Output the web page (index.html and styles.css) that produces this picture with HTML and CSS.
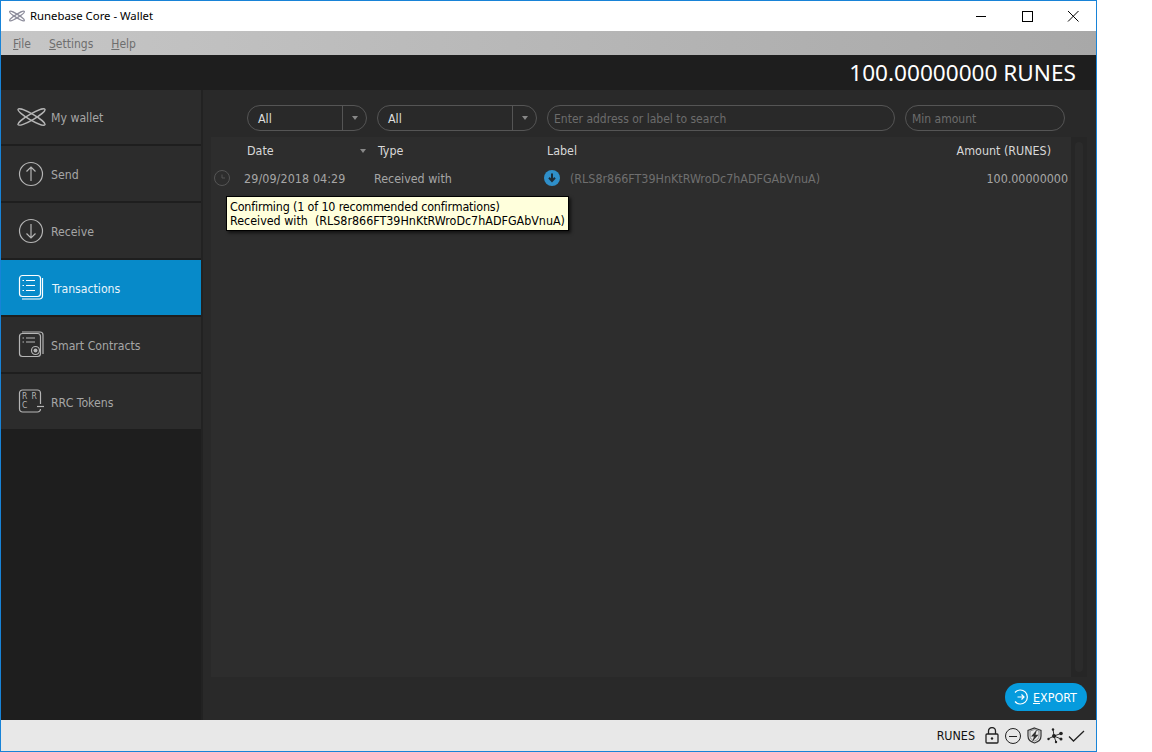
FILE: index.html
```html
<!DOCTYPE html>
<html lang="en">
<head>
    <meta charset="UTF-8">
    <title>Runebase Core - Wallet</title>
    <link rel="stylesheet" href="styles.css">
</head>
<body>

<div class="window">
    <div class="titlebar">
        <svg class="app-icon" width="16" height="12" viewBox="0 0 30 22">
            <g fill="none" stroke="#8d8d9c" stroke-width="2.500">
                <ellipse cx="15" cy="11" rx="16" ry="3" transform="rotate(32 15 11)"/>
                <ellipse cx="15" cy="11" rx="16" ry="3" transform="rotate(-32 15 11)"/>
            </g>
        </svg>
        <span class="title">Runebase Core - Wallet</span>
        <div class="win-buttons">
            <svg width="46" height="31" viewBox="0 0 46 31"><path d="M18 15.500h10" stroke="#000" fill="none"/></svg>
            <svg width="46" height="31" viewBox="0 0 46 31"><rect x="18.500" y="10.500" width="10" height="10" stroke="#000" fill="none"/></svg>
            <svg width="46" height="31" viewBox="0 0 46 31"><path d="M18 10l10.500 10.500M28.500 10L18 20.500" stroke="#000" fill="none"/></svg>
        </div>
    </div>

    <div class="menubar">
        <span class="menu-item"><u>F</u>ile</span>
        <span class="menu-item"><u>S</u>ettings</span>
        <span class="menu-item"><u>H</u>elp</span>
    </div>

    <div class="balance-bar">100.00000000 RUNES</div>

    <div class="content">
        <div class="sidebar">
            <div class="nav-item">
                <svg class="nav-icon" width="30" height="30" viewBox="0 0 30 30">
                    <g fill="none" stroke="#b5b5b5" stroke-width="1.400">
                        <ellipse cx="15.500" cy="15" rx="15.500" ry="3" transform="rotate(30 15.500 15)"/>
                        <ellipse cx="15.500" cy="15" rx="15.500" ry="3" transform="rotate(-30 15.500 15)"/>
                    </g>
                </svg>
                <span>My wallet</span>
            </div>
            <div class="nav-item">
                <svg class="nav-icon" width="30" height="30" viewBox="0 0 30 30">
                    <g fill="none" stroke="#b5b5b5" stroke-width="1.200">
                        <circle cx="15" cy="15" r="11.500"/>
                        <path d="M15 22V8M10.500 12.500L15 8l4.500 4.500"/>
                    </g>
                </svg>
                <span>Send</span>
            </div>
            <div class="nav-item">
                <svg class="nav-icon" width="30" height="30" viewBox="0 0 30 30">
                    <g fill="none" stroke="#b5b5b5" stroke-width="1.200">
                        <circle cx="15" cy="15" r="11.500"/>
                        <path d="M15 8v14M10.500 17.500L15 22l4.500-4.500"/>
                    </g>
                </svg>
                <span>Receive</span>
            </div>
            <div class="nav-item active">
                <svg class="nav-icon" width="30" height="30" viewBox="0 0 30 30">
                    <g fill="none" stroke="#fff" stroke-width="1.200">
                        <rect x="3.500" y="2.500" width="21" height="21" rx="3"/>
                        <path d="M26.500 5v18a3 3 0 0 1-3 3H6"/>
                        <path d="M10 7.500h9M10 12.500h9M10 17.500h9"/>
                        <path d="M6.500 7.500h1.500M6.500 12.500h1.500M6.500 17.500h1.500"/>
                    </g>
                </svg>
                <span>Transactions</span>
            </div>
            <div class="nav-item">
                <svg class="nav-icon" width="30" height="30" viewBox="0 0 30 30">
                    <g fill="none" stroke="#b5b5b5" stroke-width="1.200">
                        <rect x="3.500" y="3.500" width="21" height="23" rx="3"/>
                        <path d="M6 2h18a3 3 0 0 1 3 3v19"/>
                        <path d="M6.500 8h1.500M6.500 12h1.500M10 8h9M10 12h9"/>
                        <circle cx="19.500" cy="20.500" r="4"/>
                    </g>
                    <circle cx="19.500" cy="20.500" r="2" fill="#b5b5b5"/>
                </svg>
                <span>Smart Contracts</span>
            </div>
            <div class="nav-item">
                <svg class="nav-icon" width="30" height="30" viewBox="0 0 30 30">
                    <g fill="none" stroke="#b5b5b5" stroke-width="1.200">
                        <path d="M24.500 17V6a3 3 0 0 0-3-3H6.500a3 3 0 0 0-3 3v16a3 3 0 0 0 3 3h15a3 3 0 0 0 3-3"/>
                        <path d="M21 19.500h7"/>
                    </g>
                    <text class="rrc-letter" x="6" y="12">R</text>
                    <text class="rrc-letter" x="15.500" y="12">R</text>
                    <text class="rrc-letter" x="6" y="21">C</text>
                </svg>
                <span>RRC Tokens</span>
            </div>
        </div>

        <div class="main">
            <div class="filters">
                <div class="select select-type-a">
                    <span class="select-value">All</span>
                    <span class="select-arrow"></span>
                </div>
                <div class="select select-type-b">
                    <span class="select-value">All</span>
                    <span class="select-arrow"></span>
                </div>
                <div class="search search-address">Enter address or label to search</div>
                <div class="search search-amount">Min amount</div>
            </div>

            <div class="table-wrap">
                <div class="table">
                    <div class="table-head">
                        <span class="col-date">Date<i class="sort-arrow"></i></span>
                        <span class="col-type">Type</span>
                        <span class="col-label">Label</span>
                        <span class="col-amount">Amount (RUNES)</span>
                    </div>
                    <div class="table-row">
                        <svg class="status-icon" width="16" height="16" viewBox="0 0 16 16">
                            <circle cx="8" cy="8" r="7.500" fill="none" stroke="#555"/>
                            <path d="M8 4.500V8h3" fill="none" stroke="#555"/>
                        </svg>
                        <span class="row-date">29/09/2018 04:29</span>
                        <span class="row-type">Received with</span>
                        <svg class="type-icon" width="16" height="16" viewBox="0 0 16 16">
                            <circle cx="8" cy="8" r="8" fill="#2f8fc9"/>
                            <path d="M8 3.500v7M5 7.800L8 11l3-3.200" fill="none" stroke="#1d2b36" stroke-width="2"/>
                        </svg>
                        <span class="row-label">(RLS8r866FT39HnKtRWroDc7hADFGAbVnuA)</span>
                        <span class="row-amount">100.00000000</span>
                    </div>
                    <div class="tooltip"><span class="tooltip-first">Confirming (1 of 10 recommended confirmations)</span><br>Received with&nbsp; (RLS8r866FT39HnKtRWroDc7hADFGAbVnuA)</div>
                </div>
                <div class="scrollbar"><div class="scroll-track"></div></div>
            </div>

            <div class="actions">
                <div class="export-btn">
                    <svg width="16" height="16" viewBox="0 0 16 16">
                        <g fill="none" stroke="#fff" stroke-width="1.200">
                            <path d="M2 3.500a7 7 0 1 1 0 9"/>
                            <path d="M4.500 8h6.500M8.500 5.500L11 8l-2.500 2.500"/>
                        </g>
                    </svg>
                    <span><u>E</u>XPORT</span>
                </div>
            </div>
        </div>
    </div>

    <div class="statusbar">
        <span class="unit">RUNES</span>
        <svg width="14" height="17" viewBox="0 0 14 17">
            <g fill="none" stroke="#222" stroke-width="1.300">
                <rect x="1" y="7" width="12" height="9" rx="1"/>
                <path d="M3.500 7V4a3.500 3.500 0 0 1 7 0v3"/>
            </g>
            <circle cx="7" cy="11.500" r="1.200" fill="#222"/>
        </svg>
        <svg width="16" height="16" viewBox="0 0 16 16">
            <g fill="none" stroke="#222" stroke-width="1">
                <circle cx="8" cy="8" r="7.500"/>
                <path d="M4 8.500h8"/>
            </g>
        </svg>
        <svg width="15" height="17" viewBox="0 0 15 17">
            <path d="M7.500 1L14 3.500V9c0 3.500-3 6-6.500 7C4 15 1 12.500 1 9V3.500z" fill="none" stroke="#333" stroke-width="1.200"/>
            <path d="M3 4L7.500 2.500 12 4V9c0 2.500-2 4.300-4.500 5C5 13.300 3 11.500 3 9z" fill="none" stroke="#777" stroke-width="0.800"/>
            <path d="M10 2.500L4 9.500H7L5 15l6.500-7.200H8.500z" fill="#333"/>
        </svg>
        <svg class="network" width="16" height="16" viewBox="0 0 16 16">
            <g stroke="#333" stroke-width="1" fill="none">
                <path d="M7 8L6 1M7 8L1 11M7 8l2 6M7 8l7-2.500M7 8l7 3"/>
            </g>
            <g fill="#222">
                <circle cx="7" cy="8" r="2"/>
                <circle cx="6" cy="1.500" r="1.200"/>
                <circle cx="1.500" cy="11" r="1.200"/>
                <circle cx="9" cy="14" r="1.200"/>
                <circle cx="14" cy="5.500" r="1.800"/>
                <circle cx="14" cy="11" r="1.500"/>
            </g>
        </svg>
        <svg class="check" width="17" height="12" viewBox="0 0 17 12">
            <path d="M1 6.500L5.500 11 16 1" fill="none" stroke="#222" stroke-width="1.300"/>
        </svg>
    </div>
</div>

</body>
</html>
```

FILE: styles.css
```css
html, body {
    margin: 0;
    padding: 0;
    background: #fff;
}

body {
    font-family: "DejaVu Sans Condensed", "DejaVu Sans", sans-serif;
    font-stretch: condensed;
    font-size: 12.4px;
    overflow: hidden;
}

.window {
    width: 1095px;
    height: 750px;
    border: 1px solid #1883d7;
    display: flex;
    flex-direction: column;
}

.titlebar {
    height: 30px;
    background: #fff;
    display: flex;
    align-items: center;
    flex-shrink: 0;
}

.app-icon {
    margin-left: 8px;
}

.title {
    margin-left: 5px;
    padding-bottom: 2px;
    color: #000;
    font-family: "Noto Sans", sans-serif;
    font-stretch: normal;
    font-size: 11.35px;
}

.win-buttons {
    margin-left: auto;
    display: flex;
}

.win-buttons svg {
    width: 46px;
    margin-left: 0;
}

.menubar {
    height: 23px;
    padding-top: 1px;
    background: linear-gradient(to right, #c6c6c6, #a8a8a8);
    display: flex;
    align-items: center;
    padding-left: 12px;
    gap: 18px;
    color: #6e6e6e;
    font-size: 12px;
    flex-shrink: 0;
}

.balance-bar {
    height: 35px;
    line-height: 36px;
    background: #1e1e1e;
    color: #fff;
    font-family: "Noto Sans", sans-serif;
    font-stretch: normal;
    font-size: 22.6px;
    text-align: right;
    padding-right: 20px;
    flex-shrink: 0;
}

.content {
    flex: 1;
    display: flex;
    min-height: 0;
    background: #292929;
}

.sidebar {
    width: 200px;
    background: #1e1e1e;
    border-right: 2px solid #222;
    flex-shrink: 0;
}

.nav-item {
    height: 55px;
    margin-bottom: 2px;
    background: #2c2c2c;
    display: flex;
    align-items: center;
    color: #a6a6a6;
    font-size: 12.2px;
}

.nav-item span {
    padding-top: 2px;
}

.nav-item:first-child {
    height: 54px;
}

.nav-item:first-child span {
    padding-top: 1px;
}

.nav-item.active {
    background: #078ac9;
    color: #e8f4fb;
}

.nav-item.active .nav-icon {
    margin-right: 6px;
}

.nav-icon {
    margin-left: 15px;
    margin-right: 5px;
}

.rrc-letter {
    fill: #b5b5b5;
    font-family: "DejaVu Sans", sans-serif;
    font-size: 8.500px;
}

.main {
    flex: 1;
    display: flex;
    flex-direction: column;
    min-width: 0;
    padding: 15px 9px 0 8px;
}

.filters {
    display: flex;
    height: 26px;
    padding-left: 36px;
    flex-shrink: 0;
}

.select,
.search {
    height: 24px;
    border: 1px solid #555;
    border-radius: 13px;
    display: flex;
    align-items: center;
}

.select {
    color: #ddd;
}

.select-type-a {
    width: 118px;
    margin-right: 10px;
}

.select-type-b {
    width: 158px;
    margin-right: 10px;
}

.select-value {
    flex: 1;
    padding-left: 10px;
    height: 24px;
    line-height: 26px;
    border-right: 1px solid #555;
}

.select-arrow {
    width: 23px;
    display: flex;
    justify-content: center;
}

.select-arrow::after,
.sort-arrow {
    content: "";
    display: block;
    width: 0;
    height: 0;
    border-left: 3px solid transparent;
    border-right: 3px solid transparent;
    border-top: 4px solid #888;
}

.search {
    color: #6c6c6c;
    font-size: 12px;
    padding-left: 6px;
    padding-top: 1px;
    height: 23px;
}

.search-address {
    width: 340px;
    margin-right: 10px;
}

.search-amount {
    width: 152px;
}

.table-wrap {
    margin-top: 6px;
    flex: 1;
    display: flex;
    min-height: 0;
}

.table {
    flex: 1;
    background: #2d2d2d;
    position: relative;
}

.table-head {
    height: 27px;
    display: flex;
    align-items: center;
    color: #d8d8d8;
}

.col-date {
    width: 131px;
    margin-left: 36px;
    display: flex;
    align-items: center;
    justify-content: space-between;
    padding-right: 12px;
    box-sizing: border-box;
}

.col-type {
    width: 169px;
}

.col-label {
    flex: 1;
}

.col-amount {
    padding-right: 20px;
}

.table-row {
    height: 28px;
    display: flex;
    align-items: center;
    color: #a6a6a6;
}

.status-icon {
    margin-left: 3px;
}

.row-date {
    margin-left: 14px;
    width: 130px;
    letter-spacing: 0.1px;
}

.row-type {
    width: 170px;
}

.type-icon {
    flex-shrink: 0;
}

.row-label {
    margin-left: 10px;
    color: #6f6f6f;
}

.row-amount {
    margin-left: auto;
    padding-right: 3px;
}

.tooltip {
    position: absolute;
    left: 15px;
    top: 59px;
    background: #ffffdc;
    color: #000;
    border: 1px solid #000;
    box-shadow: 2px 2px 3px rgba(0, 0, 0, 0.6);
    padding: 3px 3px 2px 3px;
    line-height: 14px;
    white-space: nowrap;
}

.tooltip-first {
    letter-spacing: -0.15px;
}

.scrollbar {
    width: 16px;
    background: #262626;
    padding: 5px 4px;
    box-sizing: border-box;
}

.scroll-track {
    height: 100%;
    background: #2b2b2b;
    border-radius: 4px;
}

.actions {
    height: 43px;
    display: flex;
    justify-content: flex-end;
    align-items: flex-start;
    flex-shrink: 0;
}

.export-btn {
    margin-top: 6px;
    width: 82px;
    height: 28px;
    background: #069bdd;
    border-radius: 14px;
    color: #fff;
    display: flex;
    align-items: center;
    gap: 4px;
    padding-left: 8px;
    box-sizing: border-box;
}

.statusbar {
    height: 31px;
    background: #e8e8e8;
    display: flex;
    align-items: center;
    justify-content: flex-end;
    gap: 6px;
    padding-right: 11px;
    color: #111;
    flex-shrink: 0;
}

.unit {
    margin-right: 4px;
}

.network {
    margin-left: -1px;
}

.check {
    margin-left: -1px;
}
```
